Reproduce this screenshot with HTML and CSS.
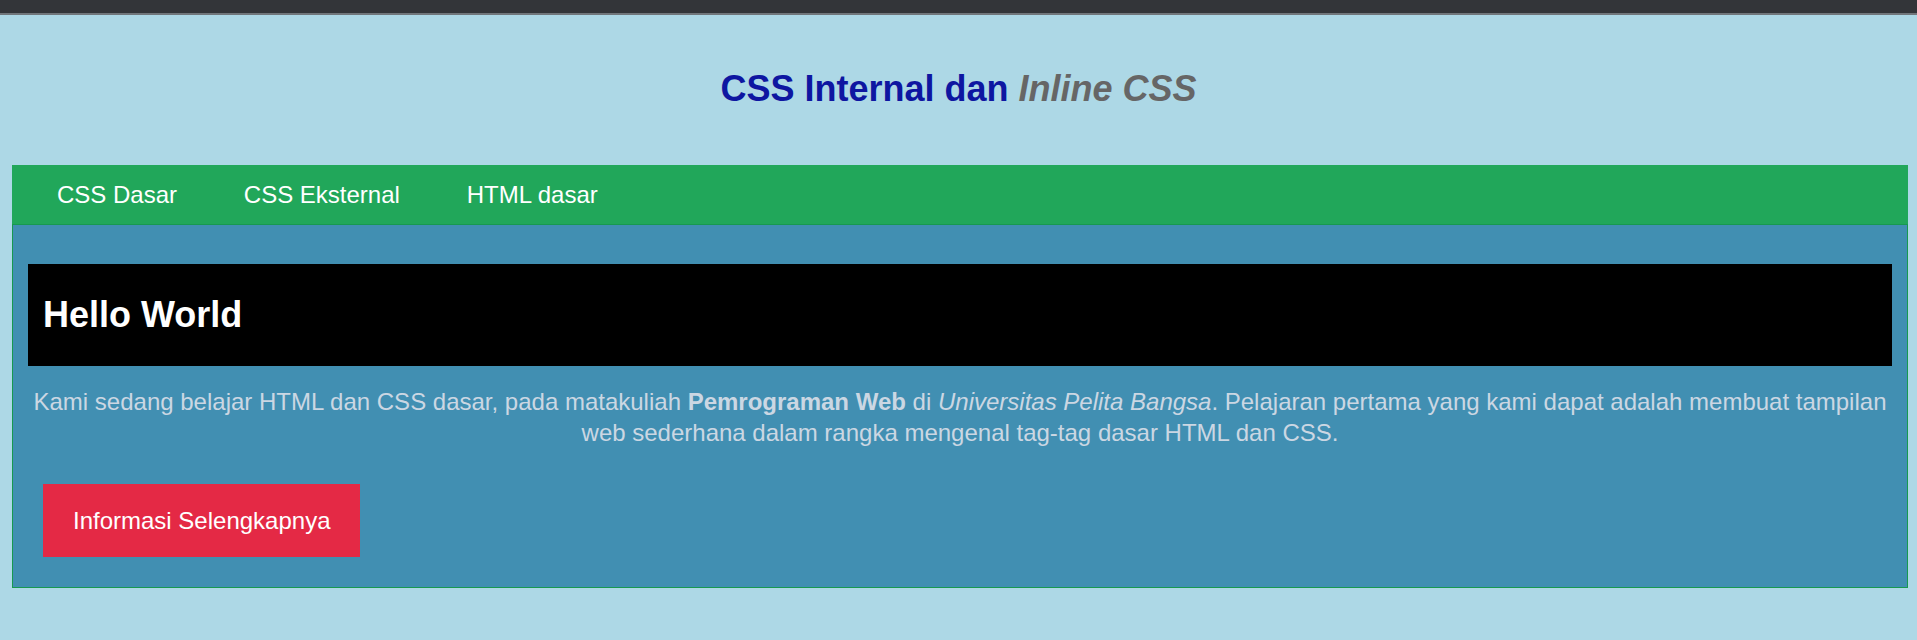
FILE: index.html
```html
<!DOCTYPE html>
<html lang="id">
<head>
<meta charset="utf-8">
<title>CSS Internal dan Inline CSS</title>
<link rel="stylesheet" href="styles.css">
</head>
<body>
<div class="topbar"></div>
<h1 class="title">CSS Internal dan <em class="title-em">Inline CSS</em></h1>
<div class="wrap">
  <nav class="nav">
    <a class="nav-link" href="#">CSS Dasar</a>
    <a class="nav-link" href="#">CSS Eksternal</a>
    <a class="nav-link" href="#">HTML dasar</a>
  </nav>
  <section class="content">
    <h2 class="hero">Hello World</h2>
    <p class="lead">Kami sedang belajar HTML dan CSS dasar, pada matakuliah <b>Pemrograman Web</b> di <i>Universitas Pelita Bangsa</i>. Pelajaran pertama yang kami dapat adalah membuat tampilan web sederhana dalam rangka mengenal tag-tag dasar HTML dan CSS.</p>
    <a class="btn" href="#">Informasi Selengkapnya</a>
  </section>
</div>
</body>
</html>
```
FILE: styles.css
```css
* { box-sizing: border-box; }
html, body { margin: 0; padding: 0; }
body {
  background: #add8e6;
  font-family: "Liberation Sans", Arial, sans-serif;
  height: 640px;
  overflow: hidden;
}
.topbar {
  height: 15px;
  background: #333539;
  border-bottom: 2px solid #71767b;
}
.title {
  margin: 54px 0 56px;
  font-size: 36px;
  line-height: 40px;
  font-weight: bold;
  text-align: center;
  color: #0e16a1;
}
.title-em {
  font-style: italic;
  color: #666666;
}
.wrap {
  margin: 0 9px 0 12px;
}
.nav {
  display: flex;
  align-items: center;
  height: 59px;
  background: #21a75a;
  padding-left: 11.6px;
}
.nav-link {
  color: #ffffff;
  text-decoration: none;
  font-size: 24px;
  line-height: 28px;
  padding: 0 33.4px;
}
.content {
  background: #418fb2;
  border: 1px solid #17994f;
  padding: 39px 15px 30px;
}
.hero {
  margin: 0;
  background: #000000;
  color: #ffffff;
  font-size: 36px;
  line-height: 40px;
  font-weight: bold;
  padding: 31px 15px;
}
.lead {
  margin: 20px 0 0;
  text-align: center;
  font-size: 24px;
  line-height: 31px;
  color: #cbd7e3;
}
.btn {
  display: inline-block;
  margin: 36px 0 0 15px;
  background: #e42945;
  color: #ffffff;
  text-decoration: none;
  font-size: 24px;
  line-height: 29px;
  padding: 22px 30px;
}
```
